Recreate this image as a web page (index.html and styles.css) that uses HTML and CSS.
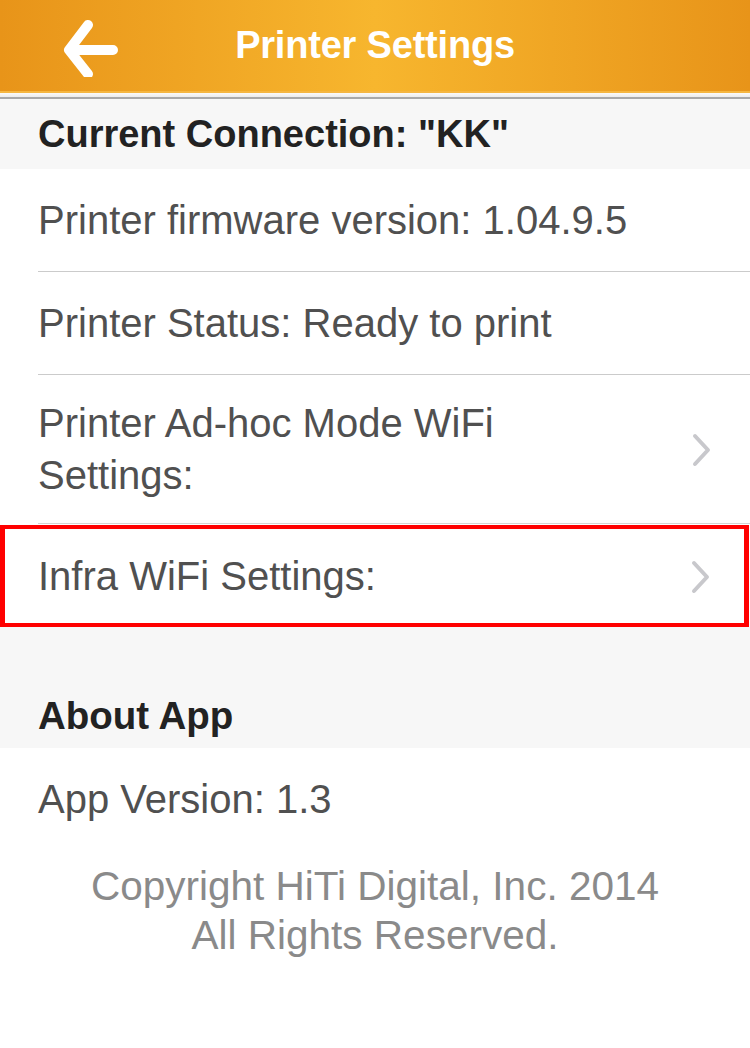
FILE: index.html
```html
<!DOCTYPE html>
<html>
<head>
<meta charset="utf-8">
<link rel="stylesheet" href="styles.css">
</head>
<body>
<div class="screen">
  <header class="nav">
    <div class="nav-bar">
      <svg class="back" width="60" height="60" viewBox="0 0 60 60">
        <path d="M29 8 L10 33 L29 57 M10 33 L54 33" fill="none" stroke="#fff" stroke-width="10" stroke-linecap="round" stroke-linejoin="round"/>
      </svg>
      <h1 class="title">Printer Settings</h1>
    </div>
    <div class="nav-shadow"></div>
  </header>

  <div class="section-head top">Current Connection: "KK"</div>
  <div class="group">
    <div class="row"><span class="label">Printer firmware version: 1.04.9.5</span></div>
    <div class="row"><span class="label">Printer Status: Ready to print</span></div>
    <div class="row tall"><span class="label">Printer Ad-hoc Mode WiFi<br>Settings:</span>
      <svg class="chev" width="20" height="34" viewBox="0 0 20 34"><path d="M3 3 L16 17 L3 31" fill="none" stroke="#c8c8cc" stroke-width="4" stroke-linecap="round" stroke-linejoin="round"/></svg>
    </div>
    <div class="row highlight"><span class="label">Infra WiFi Settings:</span>
      <svg class="chev" width="20" height="34" viewBox="0 0 20 34"><path d="M3 3 L16 17 L3 31" fill="none" stroke="#c8c8cc" stroke-width="4" stroke-linecap="round" stroke-linejoin="round"/></svg>
    </div>
  </div>

  <div class="section-head about">About App</div>
  <div class="group">
    <div class="row plain"><span class="label">App Version: 1.3</span></div>
  </div>
  <p class="copyright">Copyright HiTi Digital, Inc. 2014<br>All Rights Reserved.</p>
</div>
</body>
</html>
```

FILE: styles.css
```css
html, body {
  margin: 0;
  padding: 0;
  background: #ffffff;
}

.screen {
  width: 750px;
  height: 1048px;
  font-family: "Liberation Sans", Arial, Helvetica, sans-serif;
  background: #ffffff;
  overflow: hidden;
}

.nav {
  display: flex;
  flex-direction: column;
}

.nav-bar {
  height: 91px;
  display: flex;
  align-items: center;
  background: linear-gradient(90deg, #e89419 0%, #f7b62e 50%, #e89419 100%);
  border-bottom: 2px solid #f5b640;
}

.back {
  margin-left: 59px;
  margin-top: 3px;
}

.title {
  flex: 1;
  margin: 0 0 0 -119px;
  text-align: center;
  color: #ffffff;
  font-size: 38px;
  font-weight: bold;
  letter-spacing: -0.2px;
}

.nav-shadow {
  height: 4px;
  background: linear-gradient(#fafafa, #ececec);
  border-bottom: 2px solid #a9a9a9;
}

.section-head {
  background: #f7f7f7;
  color: #222222;
  font-size: 38px;
  font-weight: bold;
  padding-left: 38px;
  display: flex;
  box-sizing: border-box;
}

.section-head.top {
  height: 70px;
  align-items: center;
}

.section-head.about {
  height: 121px;
  align-items: flex-end;
  padding-bottom: 10px;
  font-size: 38.5px;
}

.group {
  background: #ffffff;
  padding-left: 38px;
}

.row {
  display: flex;
  align-items: center;
  justify-content: space-between;
  height: 102px;
  border-bottom: 1px solid #cbcbcb;
  color: #505050;
  font-size: 40px;
  padding-right: 38px;
}

.row .label {
  line-height: 52px;
}

.row.tall {
  height: 148px;
  border-bottom-color: #d4d4d4;
}

.row.highlight {
  height: 102px;
  margin: 1px 1px 0 -38px;
  padding: 0 33px 0 33px;
  border-style: solid;
  border-color: #ff0000;
  border-width: 4px 5px;
  box-sizing: border-box;
}

.row.plain {
  height: 101px;
  border-bottom: none;
}

.chev {
  flex: none;
  margin-top: 2px;
}

.copyright {
  margin: 13px 0 0;
  text-align: center;
  color: #8a8a8a;
  font-size: 40.5px;
  line-height: 49px;
}
```
